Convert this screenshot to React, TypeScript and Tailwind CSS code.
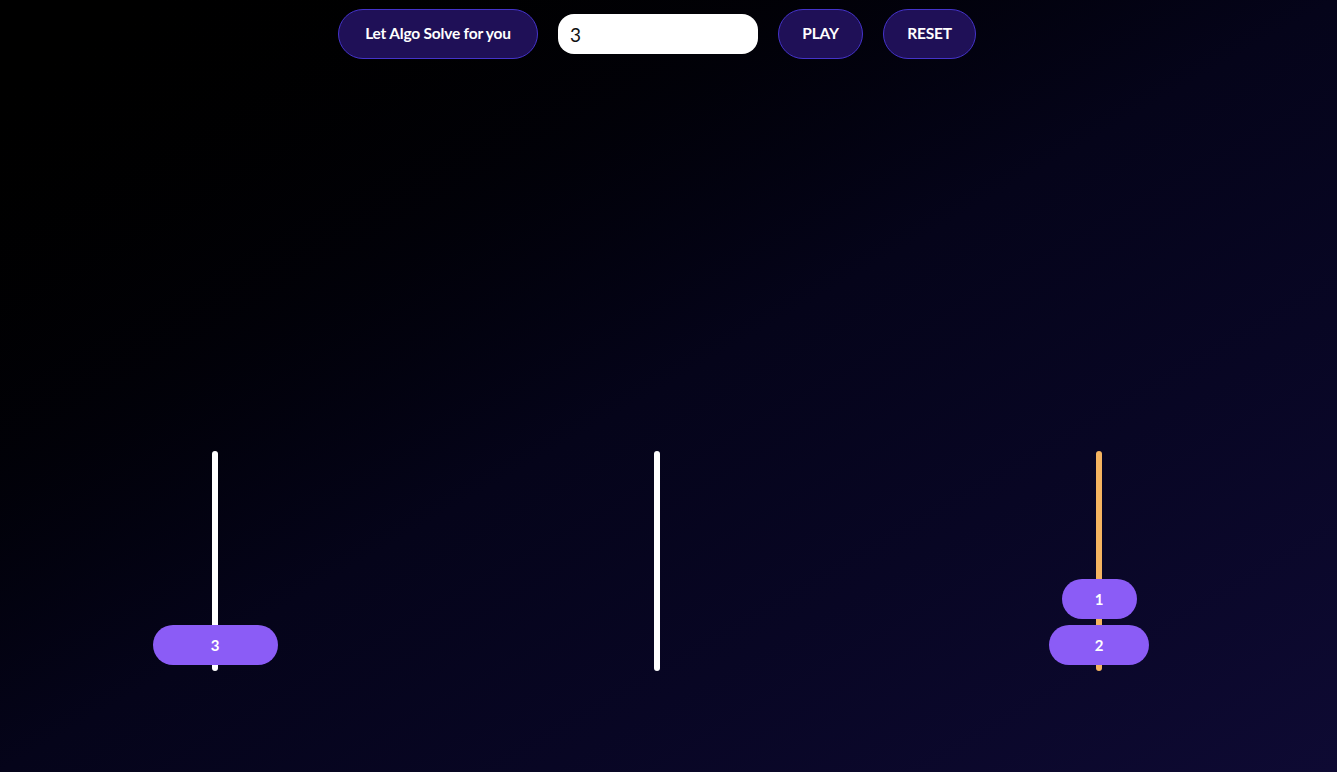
import { useState } from 'react';

interface Tower {
    id: number;
    disks: number[];
    active?: boolean;
}

export default function App() {
    const [count, setCount] = useState('3');
    const towers: Tower[] = [
        { id: 0, disks: [3] },
        { id: 1, disks: [] },
        { id: 2, disks: [1, 2], active: true },
    ];

    const btn = "h-[50px] rounded-full bg-[#1f1057] border border-[#4433c9] text-white text-[15.5px] font-bold tracking-[-0.2px]";

    return (
        <div className="min-h-screen w-full bg-gradient-to-br from-black via-[#05041a] to-[#0e0a33] font-['Lato','Open_Sans',sans-serif]">
            {/* Controls */}
            <div className="flex items-center gap-5 pt-[9px] pl-[338px]">
                <button className={`${btn} w-[200px]`}>Let Algo Solve for you</button>
                <input
                    className="w-[200px] h-10 rounded-[16px] bg-white text-[#111] text-[19px] font-normal px-3 outline-none"
                    value={count}
                    onChange={e => setCount(e.target.value)}
                />
                <button className={`${btn} w-[85px]`}>PLAY</button>
                <button className={`${btn} w-[93px]`}>RESET</button>
            </div>

            {/* Towers */}
            <div className="flex gap-[242px] pl-[115px] mt-[392px]">
                {towers.map(tower => (
                    <div key={tower.id} className="relative w-[200px] h-[220px] flex flex-col items-center justify-end gap-[6px] pb-[6px]">
                        <div className={`absolute left-[97px] top-0 w-[6px] h-[220px] rounded-full ${tower.active ? 'bg-[#f5b460]' : 'bg-white'}`} />
                        {tower.disks.map(d => (
                            <div
                                key={d}
                                className="relative h-10 rounded-full bg-[#8b5cf6] text-white text-[15px] font-bold flex items-center justify-center"
                                style={{ width: 50 + d * 25 }}
                            >
                                {d}
                            </div>
                        ))}
                    </div>
                ))}
            </div>
        </div>
    );
}
